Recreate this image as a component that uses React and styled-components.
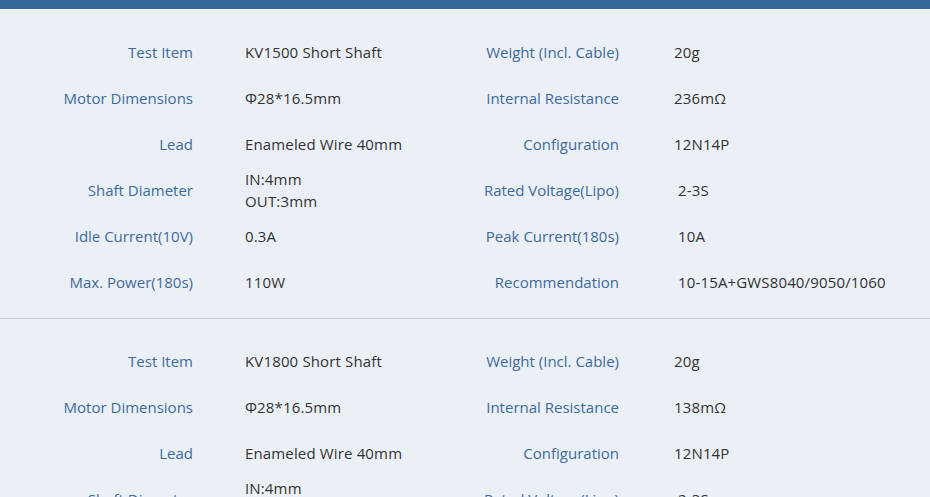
import React from "react";
import styled, { createGlobalStyle } from "styled-components";

const Global = createGlobalStyle`
  html, body { margin: 0; padding: 0; background: #ebf0f7; }
  body { font-family: "Open Sans", "Noto Sans", sans-serif; }
`;

const Page = styled.div`
  width: 930px;
  min-height: 497px;
  background: #ebf0f7;
  overflow: hidden;
`;

const TopBar = styled.div`
  height: 9px;
  background: #336699;
  border-bottom: 1px solid #f3f6fa;
`;

const Section = styled.section`
  display: grid;
  grid-template-columns: 193px 267px 159px 1fr;
  grid-auto-rows: 46px;
  align-items: center;
  padding: 19px 0 13px;
  border-bottom: 1px solid #c9ced5;
`;

const Label = styled.div`
  font-size: 15px;
  color: #3d6b9e;
  text-align: right;
  white-space: nowrap;
`;

const Value = styled.div`
  font-size: 15px;
  line-height: 22px;
  letter-spacing: 0.15px;
  color: #333333;
  padding-left: ${(p) => p.$pad}px;
  white-space: nowrap;
`;

const sections = [
  {
    rows: [
      ["Test Item", ["KV1500 Short Shaft"], 0, "Weight (Incl. Cable)", ["20g"], 0],
      ["Motor Dimensions", ["Φ28*16.5mm"], 0, "Internal Resistance", ["236mΩ"], 0],
      ["Lead", ["Enameled Wire 40mm"], 0, "Configuration", ["12N14P"], 0],
      ["Shaft Diameter", ["IN:4mm", "OUT:3mm"], 0, "Rated Voltage(Lipo)", ["2-3S"], 4],
      ["Idle Current(10V)", ["0.3A"], 0, "Peak Current(180s)", ["10A"], 4],
      ["Max. Power(180s)", ["110W"], 0, "Recommendation", ["10-15A+GWS8040/9050/1060"], 4],
    ],
  },
  {
    rows: [
      ["Test Item", ["KV1800 Short Shaft"], 0, "Weight (Incl. Cable)", ["20g"], 0],
      ["Motor Dimensions", ["Φ28*16.5mm"], 0, "Internal Resistance", ["138mΩ"], 0],
      ["Lead", ["Enameled Wire 40mm"], 0, "Configuration", ["12N14P"], 0],
      ["Shaft Diameter", ["IN:4mm", "OUT:3mm"], 0, "Rated Voltage(Lipo)", ["2-3S"], 4],
      ["Idle Current(10V)", ["0.3A"], 0, "Peak Current(180s)", ["10A"], 4],
      ["Max. Power(180s)", ["110W"], 0, "Recommendation", ["10-15A+GWS8040/9050/1060"], 4],
    ],
  },
];

export default function App() {
  return (
    <Page>
      <Global />
      <TopBar />
      {sections.map((s, si) => (
        <Section key={si}>
          {s.rows.map(([l1, v1, o1, l2, v2, o2], ri) => (
            <React.Fragment key={ri}>
              <Label>{l1}</Label>
              <Value $pad={52 + o1}>
                {v1.map((line, i) => (
                  <div key={i}>{line}</div>
                ))}
              </Value>
              <Label>{l2}</Label>
              <Value $pad={55 + o2}>
                {v2.map((line, i) => (
                  <div key={i}>{line}</div>
                ))}
              </Value>
            </React.Fragment>
          ))}
        </Section>
      ))}
    </Page>
  );
}
